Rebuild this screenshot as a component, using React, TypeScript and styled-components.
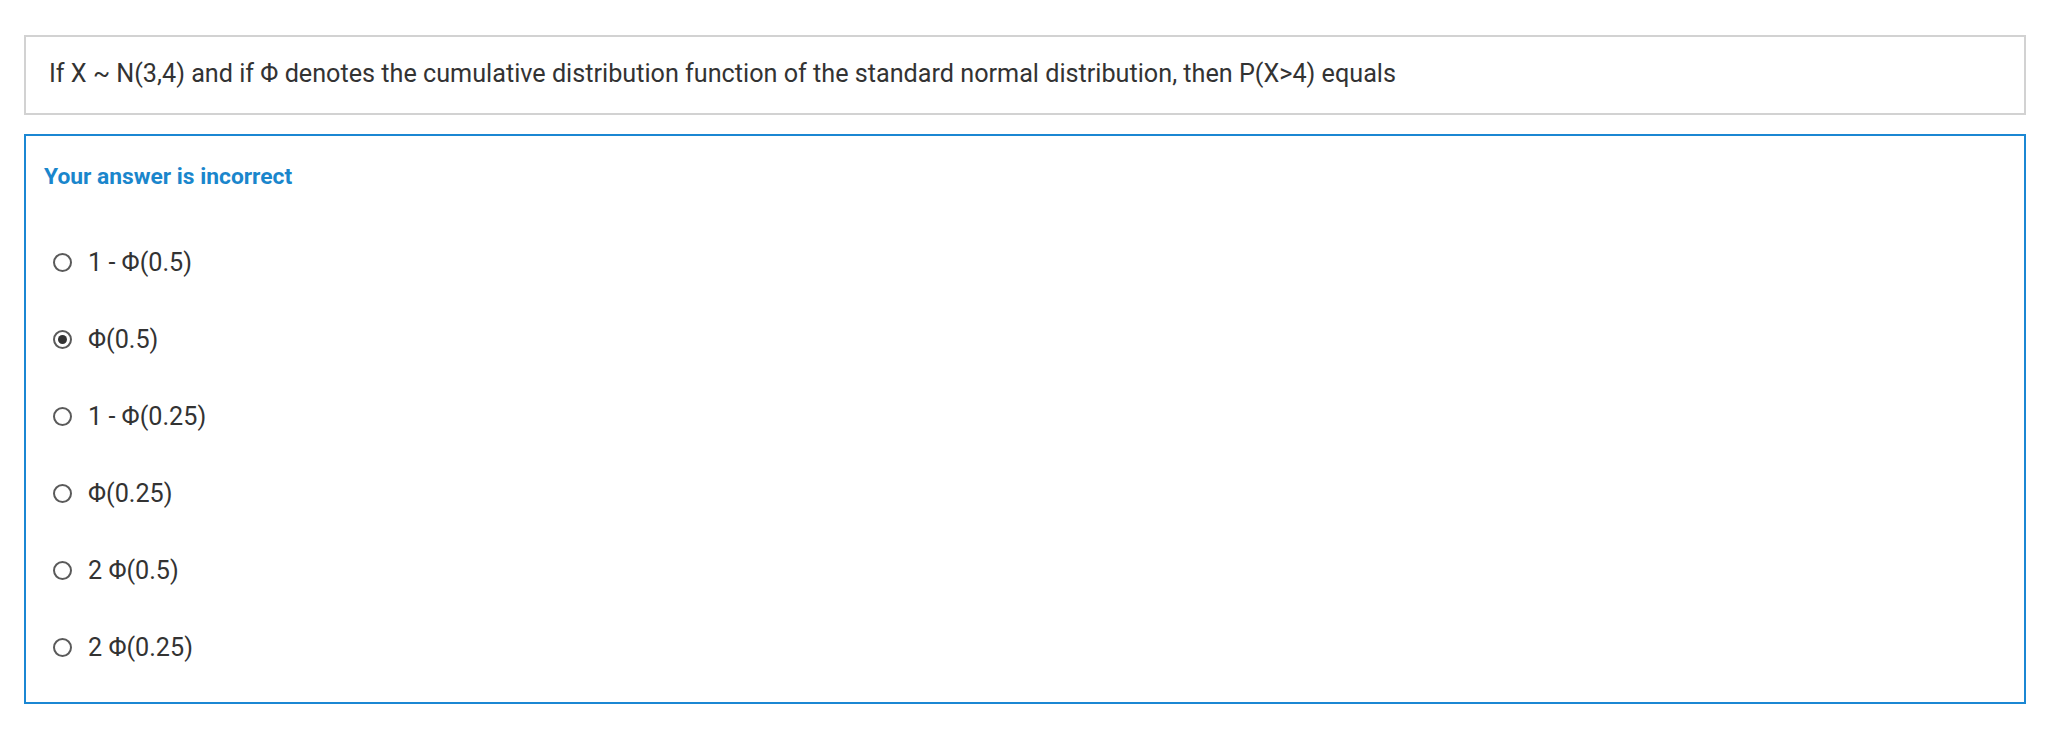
import React from "react";
import styled, { createGlobalStyle } from "styled-components";

const Global = createGlobalStyle`
  html, body { margin: 0; padding: 0; background: #ffffff; }
  body { font-family: Roboto, "Noto Sans", Arial, sans-serif; color: #333333; }
`;

const Page = styled.div`
  padding: 35px 24px 0 24px;
  display: flex;
  flex-direction: column;
  gap: 19px;
`;

const QuestionBox = styled.div`
  border: 2px solid #d2d2d2;
  padding: 19px 23px 21px 23px;
  font-size: 25.2px;
  line-height: 36px;
  color: #333333;
`;

const AnswerBox = styled.div`
  border: 2px solid #1b87d3;
  padding: 24.5px 18px 16px 18px;
  display: flex;
  flex-direction: column;
`;

const Feedback = styled.div`
  font-weight: 700;
  font-size: 22.8px;
  line-height: 32px;
  color: #1a86cc;
  margin-bottom: 31px;
`;

const OptionList = styled.div`
  display: flex;
  flex-direction: column;
`;

const OptionRow = styled.label`
  display: flex;
  align-items: center;
  height: 77px;
  gap: 16px;
  padding-left: 9px;
  font-size: 25.2px;
  color: #333333;
`;

const Radio = styled.span<{ $checked?: boolean }>`
  box-sizing: border-box;
  width: 19px;
  height: 19px;
  border-radius: 50%;
  border: 2px solid #5a5a5a;
  background: #ffffff;
  display: flex;
  align-items: center;
  justify-content: center;
  flex-shrink: 0;
  &::after {
    content: "";
    display: ${(p) => (p.$checked ? "block" : "none")};
    width: 9px;
    height: 9px;
    border-radius: 50%;
    background: #333333;
  }
`;

const options = [
  { label: "1 - Φ(0.5)", checked: false },
  { label: "Φ(0.5)", checked: true },
  { label: "1 - Φ(0.25)", checked: false },
  { label: "Φ(0.25)", checked: false },
  { label: "2 Φ(0.5)", checked: false },
  { label: "2 Φ(0.25)", checked: false },
];

export default function App() {
  return (
    <>
      <Global />
      <Page>
        <QuestionBox>
          If X ~ N(3,4) and if Φ denotes the cumulative distribution function of the standard normal distribution, then P(X&gt;4) equals
        </QuestionBox>
        <AnswerBox>
          <Feedback>Your answer is incorrect</Feedback>
          <OptionList>
            {options.map((o) => (
              <OptionRow key={o.label}>
                <Radio $checked={o.checked} />
                <span>{o.label}</span>
              </OptionRow>
            ))}
          </OptionList>
        </AnswerBox>
      </Page>
    </>
  );
}
